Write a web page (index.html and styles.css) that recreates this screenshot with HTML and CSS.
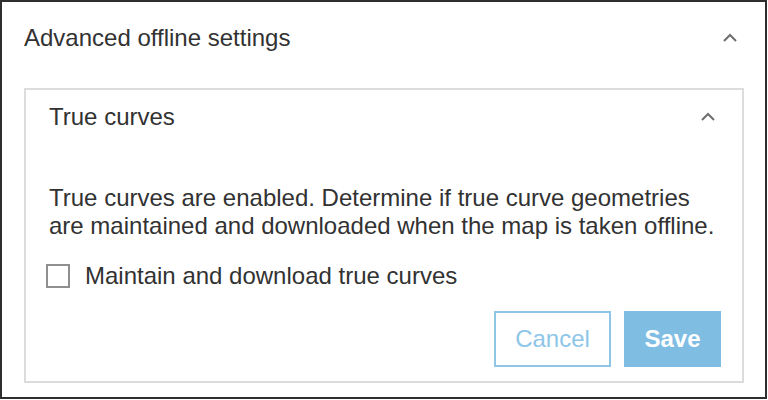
FILE: index.html
```html
<!DOCTYPE html>
<html lang="en">
<head>
<meta charset="utf-8">
<title>Advanced offline settings</title>
<link rel="stylesheet" href="styles.css">
</head>
<body>
<div class="panel">
  <div class="panel-header">
    <span class="panel-title">Advanced offline settings</span>
    <svg class="chevron" width="16" height="16" viewBox="0 0 16 16"><polyline points="2,11 8,5 14,11" fill="none" stroke="#6e6e6e" stroke-width="2"/></svg>
  </div>
  <div class="section">
    <div class="section-header">
      <span class="section-title">True curves</span>
      <svg class="chevron" width="16" height="16" viewBox="0 0 16 16"><polyline points="2,11 8,5 14,11" fill="none" stroke="#6e6e6e" stroke-width="2"/></svg>
    </div>
    <p class="description">True curves are enabled. Determine if true curve geometries are maintained and downloaded when the map is taken offline.</p>
    <label class="check-row">
      <span class="checkbox"></span>
      <span class="check-label">Maintain and download true curves</span>
    </label>
    <div class="actions">
      <button class="btn btn-cancel">Cancel</button>
      <button class="btn btn-save">Save</button>
    </div>
  </div>
</div>
</body>
</html>
```

FILE: styles.css
```css
html, body {
  margin: 0;
  padding: 0;
  background: #ffffff;
}

body {
  font-family: "Liberation Sans", Arial, sans-serif;
  font-size: 24px;
  line-height: 28px;
  color: #323232;
}

.panel {
  box-sizing: border-box;
  width: 767px;
  height: 399px;
  border: 2px solid #2e2e2e;
  display: flex;
  flex-direction: column;
}

.panel-header {
  display: flex;
  align-items: center;
  justify-content: space-between;
  padding: 22px 27px 36px 22px;
}

.chevron {
  display: block;
  flex: none;
}

.section {
  box-sizing: border-box;
  height: 295px;
  margin: 0 21px 0 22px;
  border: 2px solid #dcdcdc;
  padding: 13px 21px 0 23px;
  display: flex;
  flex-direction: column;
}

.section-header {
  display: flex;
  align-items: center;
  justify-content: space-between;
  padding-right: 5px;
}

.description {
  margin: 53px 0 0 0;
}

.check-row {
  display: flex;
  align-items: center;
  margin-top: 22px;
  height: 28px;
  margin-left: -3px;
}

.checkbox {
  box-sizing: border-box;
  width: 24px;
  height: 24px;
  border: 2px solid #8f8f8f;
  background: #ffffff;
  flex: none;
}

.check-label {
  margin-left: 15px;
}

.actions {
  display: flex;
  justify-content: flex-end;
  gap: 13px;
  margin-top: 21px;
}

.btn {
  box-sizing: border-box;
  height: 56px;
  font-family: "Liberation Sans", Arial, sans-serif;
  font-size: 24px;
  border: 2px solid #8fc6e8;
  padding: 0;
}

.btn-cancel {
  width: 117px;
  background: #ffffff;
  color: #8ec6e8;
}

.btn-save {
  width: 97px;
  background: #7fbde3;
  border-color: #7fbde3;
  color: #ffffff;
  font-weight: bold;
}
```
